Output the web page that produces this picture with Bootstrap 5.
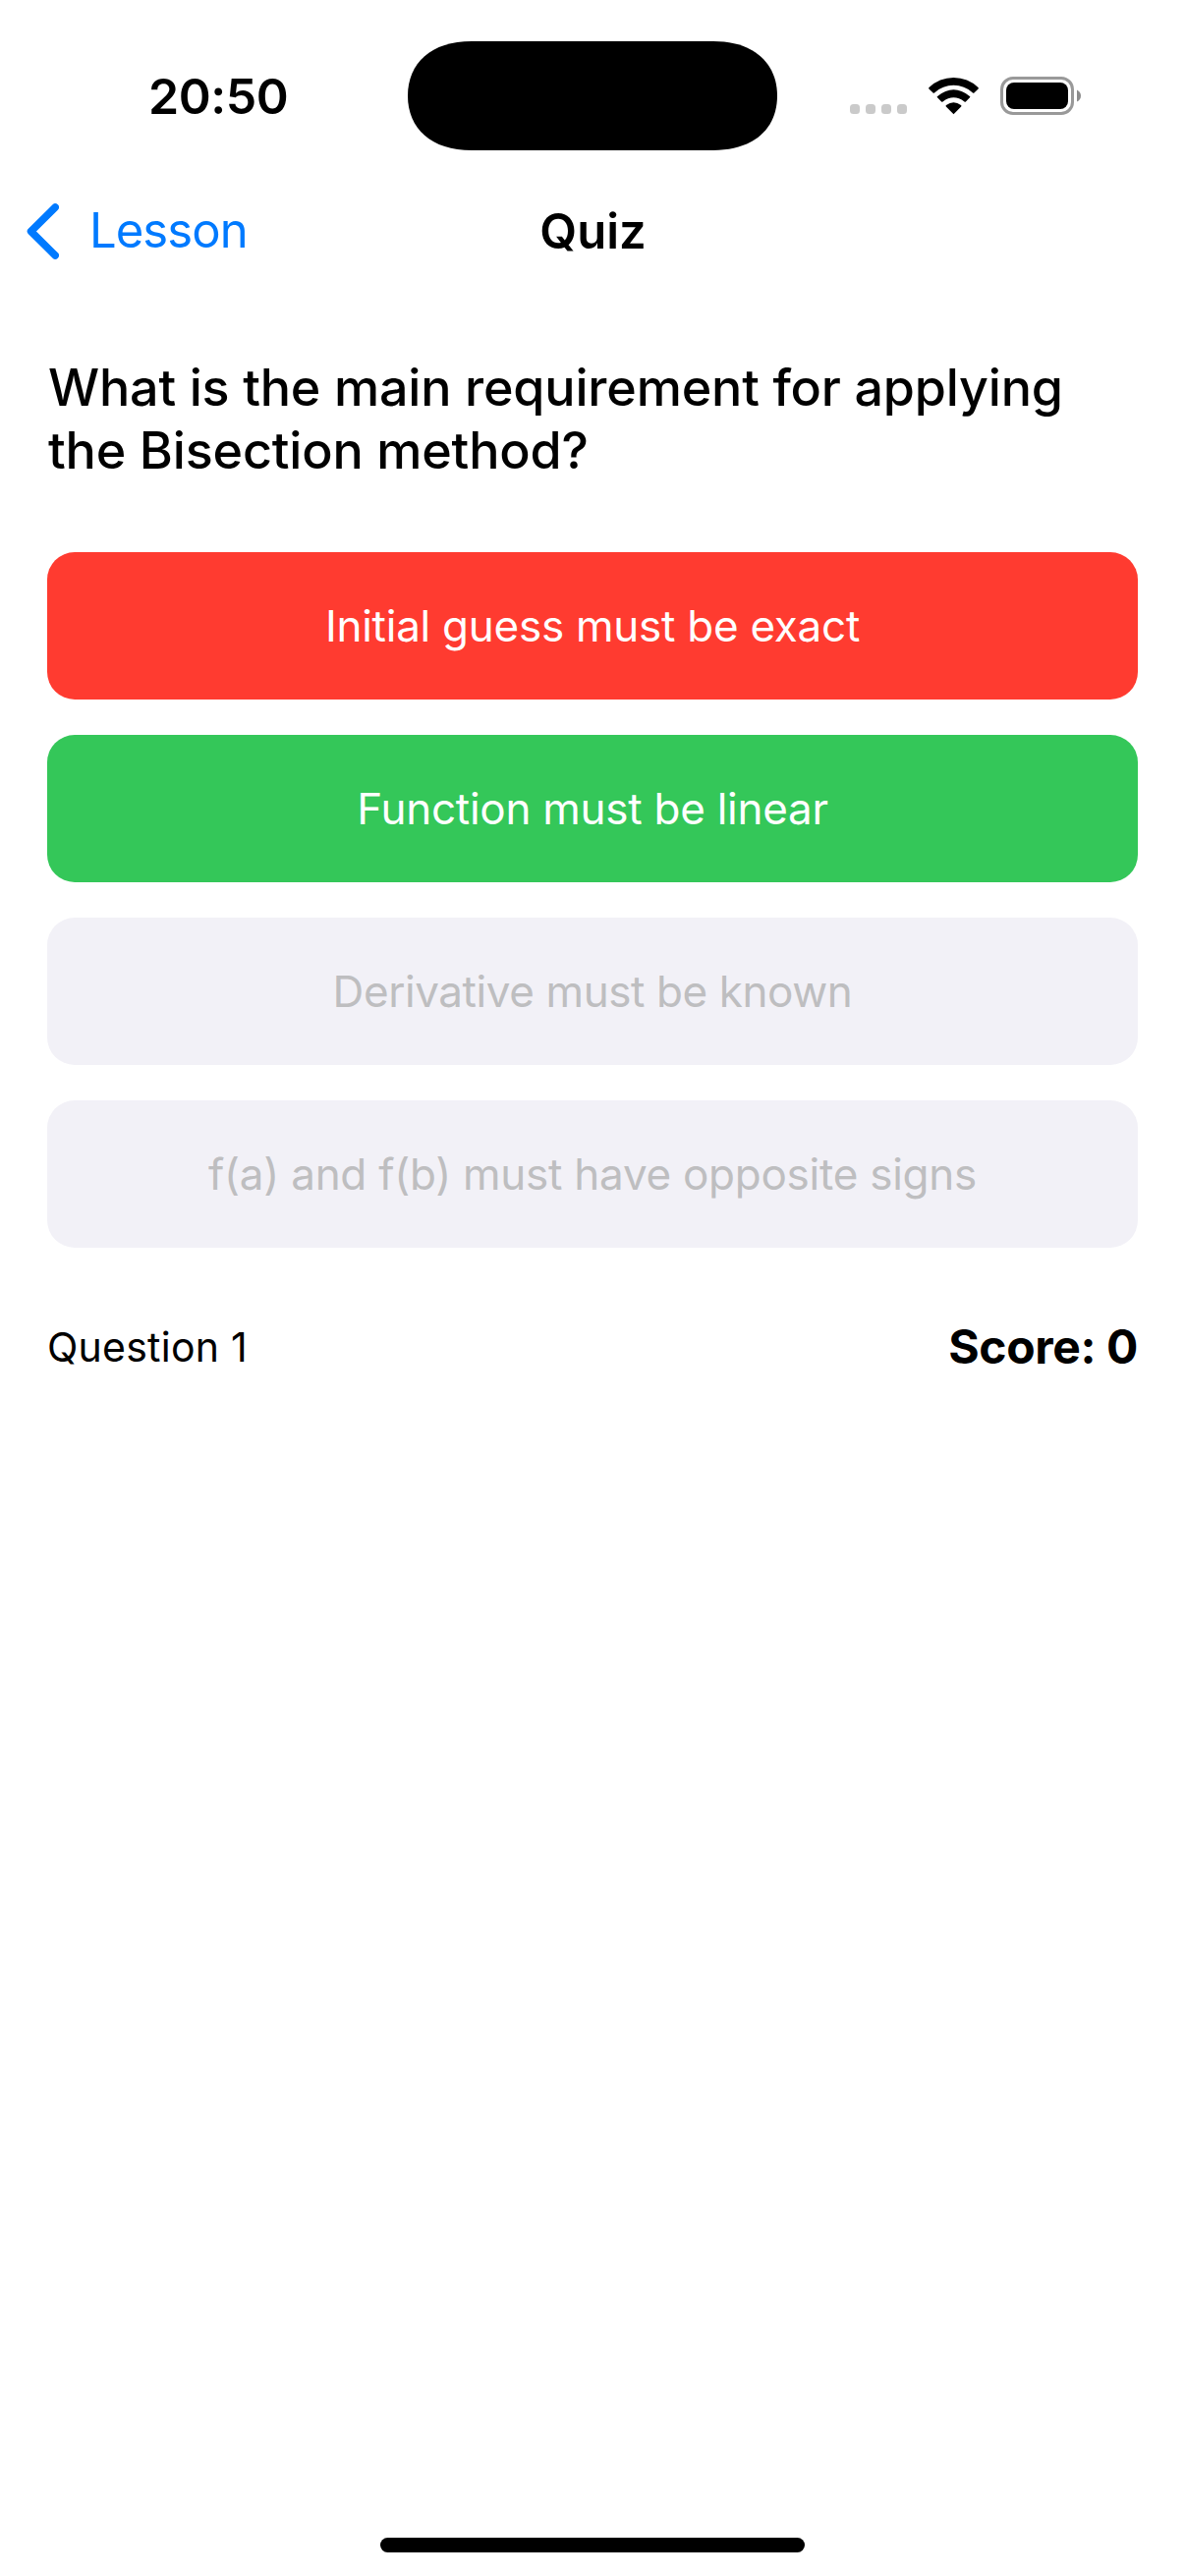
<!DOCTYPE html>
<html lang="en">
<head>
<meta charset="utf-8">
<meta name="viewport" content="width=device-width, initial-scale=1">
<title>Quiz</title>
<link href="https://cdn.jsdelivr.net/npm/bootstrap@5.3.0/dist/css/bootstrap.min.css" rel="stylesheet">
<style>
  body { font-family: Inter, "Liberation Sans", sans-serif; color: #000; background: #fff; }
  svg { display: block; }
  .screen { height: 2622px; }
  .status-bar { height: 194px; padding-left: 151px; padding-right: 106px; }
  .clock { font-size: 50px; font-weight: 600; letter-spacing: -.456px; line-height: 60px; flex: 1 0 0; padding-top: 2px; }
  .status-icons { flex: 1 0 0; gap: 22px; padding-top: 1px; }
  .island { margin-right: 45px; }
  .title-bar { height: 82px; font-size: 49px; line-height: 60px; }
  .title-bar .side { flex: 1 0 0; }
  .back-link { color: #007aff; padding-left: 27px; letter-spacing: -.95px; gap: 31px; }
  .page-title { font-size: 49px; font-weight: 600; letter-spacing: 0; line-height: 60px; padding: 2px 0 0 1px; }
  .quiz-body { padding: 87px 48px 0; }
  .question { font-size: 52px; font-weight: 500; line-height: 64px; letter-spacing: -.17px; margin-bottom: 71px; padding-left: 1px; }
  .answers { gap: 36px; }
  .answer { --bs-btn-border-width: 0; --bs-btn-disabled-opacity: 1; --bs-btn-disabled-color: #bebec0; --bs-btn-disabled-bg: #f2f1f7;
    --bs-btn-font-family: inherit; height: 150px; border-radius: 28px; font-size: 44px; letter-spacing: -.26px; }
  .answer-wrong { --bs-btn-disabled-color: #fff; --bs-btn-disabled-bg: #ff3b30; }
  .answer-right { --bs-btn-disabled-color: #fff; --bs-btn-disabled-bg: #34c759; }
  .answer-tight { letter-spacing: -.41px; }
  .progress-row { height: 61px; margin-top: 70px; }
  .counter { font-size: 41px; letter-spacing: .242px; padding-top: 2px; }
  .score { font-size: 48px; font-weight: 700; letter-spacing: -.4px; }
  .home-bar { width: 432px; height: 15px; margin-bottom: 24px; }
</style>
<script src="https://cdn.jsdelivr.net/npm/bootstrap@5.3.0/dist/js/bootstrap.bundle.min.js"></script>
</head>
<body>
<div class="screen d-flex flex-column">
  <header>
    <div class="status-bar d-flex align-items-center">
      <div class="clock">20:50</div>
      <svg class="island" width="376" height="111" viewBox="0 0 376 111"><path d="M65 0H311C352 0 376 22 376 55.500S352 111 311 111H65C24 111 0 89 0 55.500S24 0 65 0Z"/></svg>
      <div class="status-icons d-flex align-items-center justify-content-end">
        <svg width="58" height="39" viewBox="0 0 58 39" fill="#cacaca"><rect y="28" width="10" height="10" rx="3.500"/><rect x="16" y="28" width="10" height="10" rx="3.500"/><rect x="32" y="28" width="10" height="10" rx="3.500"/><rect x="48" y="28" width="10" height="10" rx="3.500"/></svg>
        <svg width="51" height="39" viewBox="0 0 51 39"><path d="M25.500 38.200 17.800 30.400Q17.200 29.700 18 29Q25.500 23.400 33 29Q33.800 29.700 33.200 30.400ZM9 21.300Q8.300 20.600 9.100 19.900Q25.500 6.400 41.900 19.900Q42.700 20.600 42 21.300L37.900 25.400Q37.200 26 36.500 25.400Q25.500 17 14.500 25.400Q13.800 26 13.100 25.400ZM.400 12.500Q-.200 11.700 .500 11Q11 1 25.500 1Q40 1 50.500 11Q51.200 11.700 50.600 12.500L46.400 16.400Q45.700 17 45 16.400Q36.500 8.800 25.500 8.800Q14.500 8.800 6 16.400Q5.300 17 4.600 16.400Z"/></svg>
        <svg width="82" height="39" viewBox="0 0 82 39"><rect x="1.500" y="1.500" width="72" height="36" rx="11.500" fill="none" stroke="#999" stroke-width="3"/><rect x="6" y="6" width="63" height="27" rx="8"/><path d="M78 13.500Q82 15.500 82 19.500Q82 23.500 78 25.500Z" fill="#8c8c8c"/></svg>
      </div>
    </div>
    <nav class="title-bar d-flex align-items-center">
      <div class="side">
        <a class="back-link d-flex align-items-center text-decoration-none" href="#">
          <svg width="33" height="57" viewBox="0 0 33 57" fill="none" stroke="#007aff" stroke-width="7.500" stroke-linecap="round" stroke-linejoin="round"><path d="M29.200 4 4.500 28.500 29.200 53"/></svg>
          <span>Lesson</span>
        </a>
      </div>
      <h1 class="page-title m-0">Quiz</h1>
      <div class="side"></div>
    </nav>
  </header>
  <main class="quiz-body">
    <h2 class="question">What is the main requirement for applying the Bisection method?</h2>
    <div class="answers d-grid">
      <button type="button" class="btn answer answer-wrong" disabled>Initial guess must be exact</button>
      <button type="button" class="btn answer answer-right" disabled>Function must be linear</button>
      <button type="button" class="btn answer answer-tight" disabled>Derivative must be known</button>
      <button type="button" class="btn answer" disabled>f(a) and f(b) must have opposite signs</button>
    </div>
    <div class="progress-row d-flex justify-content-between align-items-center">
      <span class="counter">Question 1</span>
      <span class="score">Score: 0</span>
    </div>
  </main>
  <div class="home-bar bg-black rounded-pill mt-auto mx-auto"></div>
</div>
</body>
</html>
